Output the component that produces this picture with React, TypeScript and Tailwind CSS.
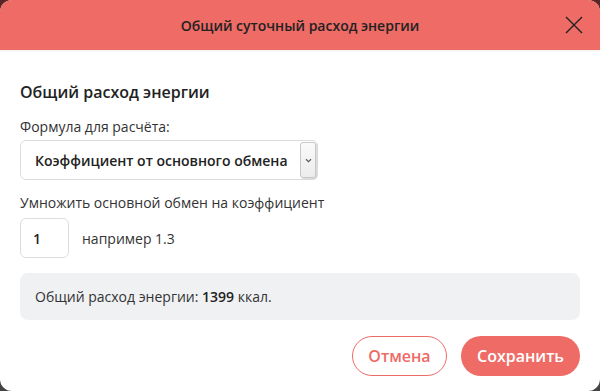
export default function App() {
  return (
    <div className="h-[391px] w-[600px] bg-gradient-to-b from-[#5b2525] to-[#444444] font-['Open_Sans',sans-serif]">
      <div className="flex h-full flex-col overflow-hidden rounded-[12px] bg-white">
        <header className="relative flex h-[50px] shrink-0 items-center justify-center bg-[#ee6b66] shadow-[0_1px_2px_rgba(0,0,0,0.08)]">
          <h1 className="text-[14px] font-semibold text-[#222]">Общий суточный расход энергии</h1>
          <button className="absolute right-[16px] top-[15px] h-[20px] w-[20px] text-[#222]">
            <svg viewBox="0 0 20 20" className="h-[20px] w-[20px]" fill="none" stroke="currentColor" strokeWidth="1.4">
              <path d="M2 2 L18 18 M18 2 L2 18" />
            </svg>
          </button>
        </header>

        <div className="flex flex-1 flex-col px-[20px] text-[#333]">
          <h2 className="mt-[30px] text-[16px] font-semibold leading-[24px] text-[#222]">Общий расход энергии</h2>
          <p className="mt-[13px] text-[14px] leading-[20px]">Формула для расчёта:</p>
          <div className="mt-[3px] flex h-[40px] w-[298px] items-center justify-between rounded-[6px] border border-[#dcdcdc] pl-[14px] pr-[1px]">
            <span className="text-[14px] font-semibold text-[#222]">Коэффициент от основного обмена</span>
            <span className="flex h-[36px] w-[16px] items-center justify-center rounded-[3px] border border-[#c8c8c8] bg-gradient-to-b from-[#fafafa] to-[#ececec] text-[#555] shadow-[1px_1px_1px_rgba(0,0,0,0.15)]">
              <svg viewBox="0 0 8 6" className="h-[5px] w-[7px]" fill="none" stroke="currentColor" strokeWidth="1.3">
                <path d="M1 1.5 L4 4.5 L7 1.5" />
              </svg>
            </span>
          </div>

          <p className="mt-[13px] text-[14px] leading-[20px]">Умножить основной обмен на коэффициент</p>
          <div className="mt-[5px] flex items-center gap-[13px]">
            <div className="flex h-[40px] w-[49px] items-center rounded-[6px] border border-[#dcdcdc] pl-[12px] text-[14px] font-semibold text-[#222]">
              1
            </div>
            <span className="text-[14px]">например 1.3</span>
          </div>

          <div className="mt-[15px] flex h-[47px] items-center rounded-[8px] bg-[#f0f1f3] px-[15px] text-[14px]">
            Общий расход энергии:&nbsp;<b className="font-semibold text-[#222]">1399</b>&nbsp;ккал.
          </div>

          <div className="mt-[16px] flex justify-end gap-[14px]">
            <button className="h-[40px] w-[95px] rounded-full border border-[#ee6b66] text-[16px] font-semibold text-[#ee6b66]">
              Отмена
            </button>
            <button className="h-[40px] w-[119px] rounded-full bg-[#ee6b66] text-[16px] font-semibold text-white">
              Сохранить
            </button>
          </div>
        </div>
      </div>
    </div>
  );
}
